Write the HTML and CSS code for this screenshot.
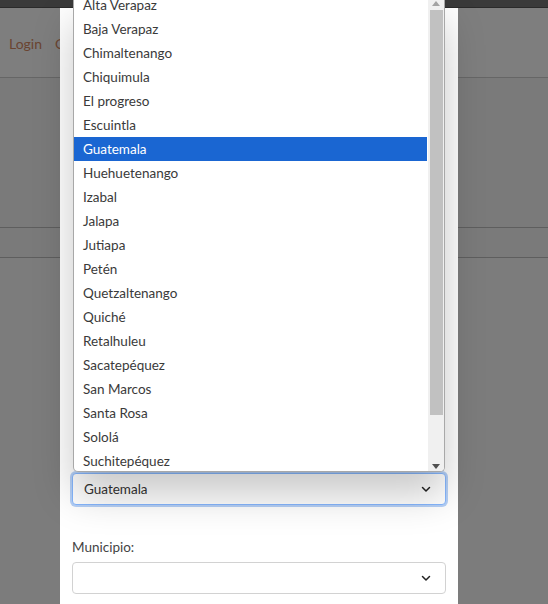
FILE: index.html
```html
<!DOCTYPE html>
<html lang="es">
<head>
<meta charset="utf-8">
<title>Registro</title>
<link rel="stylesheet" href="styles.css">
</head>
<body>
  <div class="topbar"></div>
  <nav class="navbar">
    <a class="nav-link" href="#">Login</a>
    <a class="nav-link" href="#">Contacto</a>
  </nav>
  <section class="hero"></section>
  <section class="band"></section>
  <section class="rest"></section>

  <div class="modal">
    <div class="modal-body">
      <div class="field">
        <div class="select focused">
          <span>Guatemala</span>
          <svg class="chev" width="12" height="12" viewBox="0 0 12 12"><path d="M2.5 4.5 6 8l3.5-3.5" fill="none" stroke="#222" stroke-width="1.5" stroke-linecap="round" stroke-linejoin="round"/></svg>
        </div>
      </div>
      <div class="field">
        <label class="label">Municipio:</label>
        <div class="select">
          <span></span>
          <svg class="chev" width="12" height="12" viewBox="0 0 12 12"><path d="M2.5 4.5 6 8l3.5-3.5" fill="none" stroke="#222" stroke-width="1.5" stroke-linecap="round" stroke-linejoin="round"/></svg>
        </div>
      </div>
    </div>
  </div>

  <div class="dropdown">
    <ul class="options">
      <li>Alta Verapaz</li>
      <li>Baja Verapaz</li>
      <li>Chimaltenango</li>
      <li>Chiquimula</li>
      <li>El progreso</li>
      <li>Escuintla</li>
      <li class="selected">Guatemala</li>
      <li>Huehuetenango</li>
      <li>Izabal</li>
      <li>Jalapa</li>
      <li>Jutiapa</li>
      <li>Petén</li>
      <li>Quetzaltenango</li>
      <li>Quiché</li>
      <li>Retalhuleu</li>
      <li>Sacatepéquez</li>
      <li>San Marcos</li>
      <li>Santa Rosa</li>
      <li>Sololá</li>
      <li>Suchitepéquez</li>
    </ul>
    <div class="scrollbar">
      <div class="arrow up"></div>
      <div class="thumb"></div>
      <div class="arrow down"></div>
    </div>
  </div>
</body>
</html>
```

FILE: styles.css
```css
* { box-sizing: border-box; }

html, body {
  margin: 0;
  height: 100%;
  overflow: hidden;
}

body {
  background: #777777;
  font-family: Lato, "Open Sans", Arial, sans-serif;
  position: relative;
}

.topbar {
  height: 8px;
  background: #3a3a3a;
  border-bottom: 1px solid #2a2a2a;
}

.navbar {
  height: 70px;
  background: #7e7e7e;
  border-bottom: 1px solid #666;
  display: flex;
  align-items: center;
  gap: 13px;
  padding-left: 9px;
  padding-top: 2px;
}

.nav-link {
  color: #6a4431;
  text-decoration: none;
  font-size: 14px;
}

.hero {
  height: 150px;
  background: #7a7a7a;
  border-bottom: 1px solid #5e5e5e;
}

.band {
  height: 30px;
  background: #7a7a7a;
  border-bottom: 1px solid #5e5e5e;
}

.rest {
  height: 400px;
  background: #7c7c7c;
}

.modal {
  position: absolute;
  left: 60px;
  top: 8px;
  width: 398px;
  height: 700px;
  background: #fff;
}

.modal-body {
  padding: 465px 12px 0 12px;
  display: flex;
  flex-direction: column;
  gap: 32px;
}

.field {
  display: flex;
  flex-direction: column;
  gap: 5px;
}

.label {
  font-size: 13.5px;
  line-height: 20px;
  color: #444;
}

.select {
  height: 32px;
  width: 374px;
  border: 1px solid #d2d2d2;
  border-radius: 4px;
  background: #fff;
  display: flex;
  align-items: center;
  justify-content: space-between;
  padding: 0 13px 0 11px;
  font-size: 13.5px;
  color: #333;
}

.select.focused {
  border: 1px solid #86b7fe;
  box-shadow: 0 0 0 2px rgba(120, 170, 240, 0.55);
}

.dropdown {
  position: absolute;
  left: 73px;
  top: 0;
  width: 372px;
  height: 472px;
  background: #fff;
  border: 1px solid #a8a8a8;
  border-top: none;
  border-radius: 0 0 5px 5px;
  box-shadow: 0 22px 40px rgba(0, 0, 0, 0.22);
  display: grid;
  grid-template-columns: 1fr 16px;
  overflow: hidden;
  z-index: 5;
}

.options {
  list-style: none;
  margin: -7px 0 0 0;
  padding: 0;
  font-size: 13.5px;
  color: #3a3a3a;
}

.options li {
  height: 24px;
  line-height: 24px;
  padding-left: 9px;
  white-space: nowrap;
}

.options li.selected {
  background: #1a66d2;
  color: #fff;
  margin-right: 1px;
}

.scrollbar {
  background: #f0f0f0;
  display: flex;
  flex-direction: column;
  align-items: center;
}

.arrow {
  width: 0;
  height: 0;
  border-left: 4px solid transparent;
  border-right: 4px solid transparent;
}

.arrow.up {
  margin-top: 1px;
  border-bottom: 5px solid #a3a3a3;
  margin-bottom: 4px;
}

.arrow.down {
  margin-top: auto;
  margin-bottom: 4px;
  border-top: 5px solid #505050;
}

.thumb {
  width: 13px;
  height: 405px;
  background: #c1c1c1;
}
```
